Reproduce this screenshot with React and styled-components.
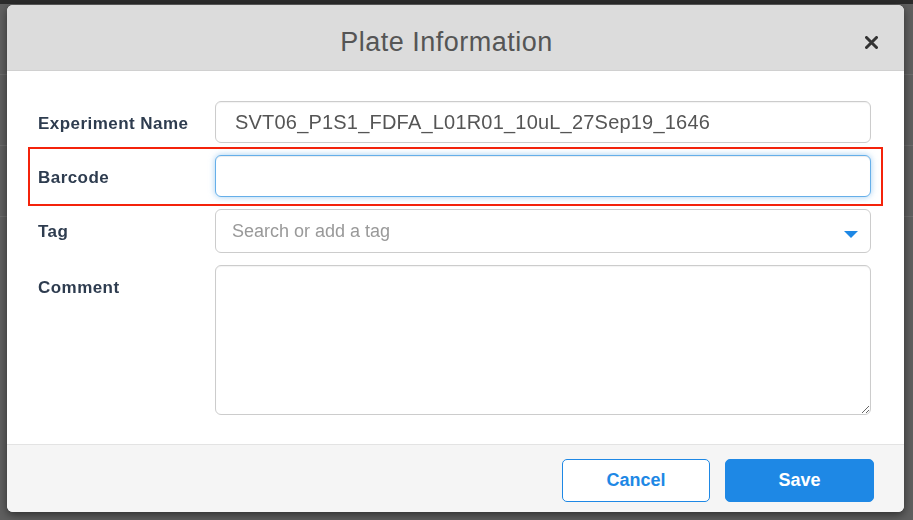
import React, { useState } from 'react'
import styled, { createGlobalStyle } from 'styled-components'

const GlobalStyle = createGlobalStyle`
    html, body {
        margin: 0;
        padding: 0;
        height: 100%;
    }
    body {
        font-family: "Liberation Sans", Arial, sans-serif;
        background: #5f5f5f;
    }
    #root {
        height: 100%;
    }
`

function App() {
    const [experimentName, setExperimentName] = useState("SVT06_P1S1_FDFA_L01R01_10uL_27Sep19_1646");
    const [barcode, setBarcode] = useState("");
    const [tag, setTag] = useState("");
    const [comment, setComment] = useState("");

    return (
        <>
        <GlobalStyle/>
        <PageBehind>
            <TopBar/>
            <GhostRow/>
            <GhostRow/>
            <GhostRow/>
        </PageBehind>
        <Overlay>
            <Modal>
                <Header>
                    <Title>Plate Information</Title>
                    <CloseButton aria-label="Close">
                        <svg width="13" height="13" viewBox="0 0 13 13">
                            <path d="M1.5 1.5 L11.5 11.5 M11.5 1.5 L1.5 11.5" stroke="#333" strokeWidth="3" strokeLinecap="round"/>
                        </svg>
                    </CloseButton>
                </Header>

                <Body>
                    <Row>
                        <Label>Experiment Name</Label>
                        <TextInput value={experimentName} onChange={e => setExperimentName(e.target.value)}/>
                    </Row>

                    <Row highlighted>
                        <Label>Barcode</Label>
                        <TextInput focused value={barcode} onChange={e => setBarcode(e.target.value)}/>
                    </Row>

                    <Row>
                        <Label>Tag</Label>
                        <SelectBox>
                            <SelectInput placeholder="Search or add a tag" value={tag} onChange={e => setTag(e.target.value)}/>
                            <Caret/>
                        </SelectBox>
                    </Row>

                    <Row>
                        <Label>Comment</Label>
                        <CommentArea value={comment} onChange={e => setComment(e.target.value)}/>
                    </Row>
                </Body>

                <Footer>
                    <Button>Cancel</Button>
                    <Button primary>Save</Button>
                </Footer>
            </Modal>
        </Overlay>
        </>
    )
};

const PageBehind = styled.div`
    height: 100%;
    display: flex;
    flex-direction: column;
    gap: 70px;
    background: #5f5f5f;
`

const TopBar = styled.div`
    height: 4px;
    background: #2b2b2b;
`

const GhostRow = styled.div`
    height: 1px;
    background: #6c6c6c;
`

const Overlay = styled.div`
    position: fixed;
    inset: 0;
    display: flex;
    padding: 5px 9px 8px 7px;
`

const Modal = styled.div`
    flex: 1;
    display: flex;
    flex-direction: column;
    background: #fff;
    border-radius: 6px;
    overflow: hidden;
    box-shadow: 0 3px 9px rgba(0, 0, 0, 0.5);
`

const Header = styled.div`
    height: 66px;
    flex-shrink: 0;
    box-sizing: border-box;
    display: flex;
    align-items: center;
    justify-content: center;
    position: relative;
    padding: 9px 18px 0 0;
    background: #dcdcdc;
    border-bottom: 1px solid #d0d0d0;
`

const Title = styled.h2`
    margin: 0;
    font-size: 27px;
    font-weight: 400;
    letter-spacing: 0.5px;
    color: #555;
`

const CloseButton = styled.button`
    position: absolute;
    right: 26px;
    top: 31px;
    padding: 0;
    border: none;
    background: none;
    display: flex;
    cursor: pointer;
`

const Body = styled.div`
    flex: 1;
    display: flex;
    flex-direction: column;
    gap: 12px;
    padding: 30px 33px 28px 31px;
`

const Row = styled.div`
    display: grid;
    grid-template-columns: 177px 1fr;
    align-items: start;
    ${props => props.highlighted && `
        margin: -8px -12px -9px -10px;
        padding: 6px 10px 7px 8px;
        border: 2px solid #f4230b;
    `}
`

const Label = styled.label`
    padding-top: 2px;
    margin-bottom: -2px;
    line-height: 42px;
    font-size: 17px;
    font-weight: 700;
    letter-spacing: 0.45px;
    color: #2e3c4f;
`

const TextInput = styled.input`
    height: 42px;
    box-sizing: border-box;
    padding: 0 19px;
    font-family: "Liberation Sans", Arial, sans-serif;
    font-size: 20px;
    letter-spacing: 0.2px;
    color: #555;
    border: 1px solid ${props => props.focused ? "#66afe9" : "#ccc"};
    border-radius: 6px;
    outline: none;
    box-shadow: ${props => props.focused
        ? "inset 0 1px 1px rgba(0,0,0,.075), 0 0 6px rgba(102,175,233,.6)"
        : "inset 0 1px 1px rgba(0,0,0,.05)"};
`

const SelectBox = styled.div`
    height: 44px;
    box-sizing: border-box;
    display: flex;
    align-items: center;
    padding: 0 12px 0 16px;
    border: 1px solid #ccc;
    border-radius: 6px;
`

const SelectInput = styled.input`
    flex: 1;
    border: none;
    outline: none;
    padding: 0;
    font-family: "Liberation Sans", Arial, sans-serif;
    font-size: 18px;
    color: #555;

    &::placeholder {
        color: #999;
    }
`

const Caret = styled.span`
    width: 0;
    height: 0;
    margin-top: 6px;
    border-left: 7px solid transparent;
    border-right: 7px solid transparent;
    border-top: 7px solid #1e88e5;
`

const CommentArea = styled.textarea`
    height: 150px;
    box-sizing: border-box;
    resize: vertical;
    padding: 10px 16px;
    font-family: "Liberation Sans", Arial, sans-serif;
    font-size: 18px;
    color: #555;
    border: 1px solid #ccc;
    border-radius: 6px;
    outline: none;
    box-shadow: inset 0 1px 1px rgba(0,0,0,.05);
`

const Footer = styled.div`
    height: 68px;
    flex-shrink: 0;
    box-sizing: border-box;
    display: flex;
    justify-content: flex-end;
    align-items: flex-start;
    gap: 15px;
    padding: 14px 30px 0 0;
    background: #f5f5f5;
    border-top: 1px solid #e3e3e3;
`

const Button = styled.button`
    width: ${props => props.primary ? "149px" : "148px"};
    height: 43px;
    border-radius: 5px;
    border: 1px solid #1e88e5;
    background: ${props => props.primary ? "#1e88e5" : "#fff"};
    color: ${props => props.primary ? "#fff" : "#1e88e5"};
    font-family: "Liberation Sans", Arial, sans-serif;
    font-size: 18px;
    font-weight: 700;
    cursor: pointer;
`

export default App;
